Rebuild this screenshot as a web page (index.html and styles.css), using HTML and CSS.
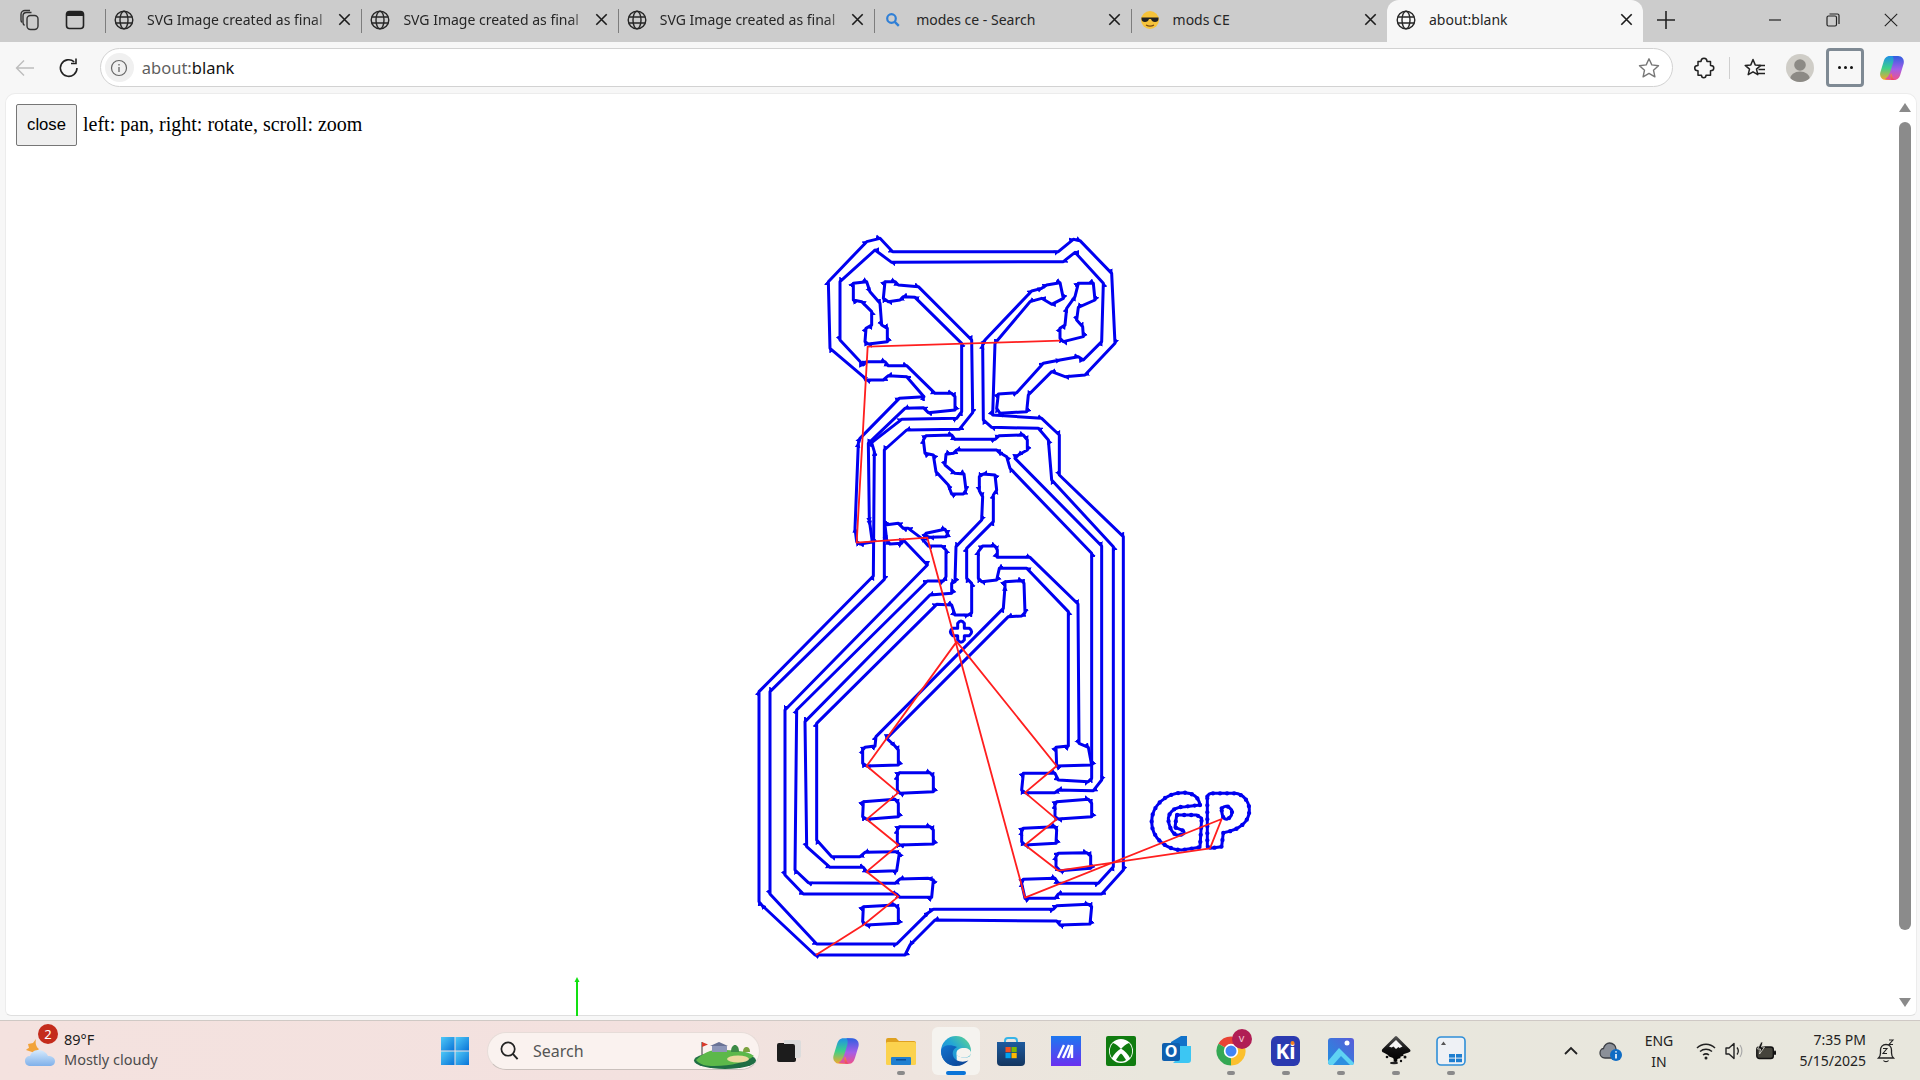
FILE: index.html
```html
<!DOCTYPE html>
<html lang="en">
<head>
<meta charset="utf-8">
<title>about:blank</title>
<link rel="stylesheet" href="styles.css">
</head>
<body>
<svg class="defs" width="0" height="0" aria-hidden="true">
  <defs>
    <symbol id="globe" viewBox="0 0 20 20"><g fill="none" stroke="#262626" stroke-width="1.4"><circle cx="10" cy="10" r="8.8"/><ellipse cx="10" cy="10" rx="4" ry="8.8"/><path d="M1.8 7h16.4M1.8 13h16.4"/></g></symbol>
    <symbol id="x" viewBox="0 0 12 12"><path d="M1.2 1.2l9.6 9.6M10.8 1.2l-9.6 9.6" fill="none" stroke="#1c1c1c" stroke-width="1.5"/></symbol>
    <linearGradient id="cpA" x1="0" y1="0" x2="0" y2="1"><stop offset="0" stop-color="#1f8fe8"/><stop offset=".5" stop-color="#3bd08a"/><stop offset="1" stop-color="#f7a82b"/></linearGradient>
    <linearGradient id="cpB" x1="0" y1="0" x2="0" y2="1"><stop offset="0" stop-color="#f0508a"/><stop offset=".45" stop-color="#a35ee8"/><stop offset="1" stop-color="#2f5fe0"/></linearGradient>
    <linearGradient id="cpC" x1="0" y1="0" x2="0" y2="1"><stop offset="0" stop-color="#f7a02b"/><stop offset="1" stop-color="#e8406a"/></linearGradient>
    <symbol id="copilot" viewBox="0 0 28 28">
      <path d="M12 2C8 2 6.500 4.500 5.500 8L2.300 18.500C1.300 22.500 4 26 8 26h5.500C12 24 12.300 21.500 13 19L15.500 11C16.500 7.500 18 4.500 21 3 19 2.300 16 2 12 2Z" fill="url(#cpA)"/>
      <path d="M12 2C8 2 6.500 4.500 5.500 8L2.300 18.500C1.300 22.500 4 26 8 26h5.500C12 24 12.300 21.500 13 19L15.500 11C16.500 7.500 18 4.500 21 3 19 2.300 16 2 12 2Z" fill="url(#cpB)" transform="rotate(180 14 14)"/>
      <path d="M13 19c-.7 2.500-1 5 .5 7H17c-1.500-.5-2.500-2-2.800-4z" fill="url(#cpC)"/>
    </symbol>
    <linearGradient id="edgeA" x1="0" y1="1" x2="1" y2="0"><stop offset="0" stop-color="#1b78d8"/><stop offset=".55" stop-color="#23a6d5"/><stop offset="1" stop-color="#63d98a"/></linearGradient>
    <linearGradient id="edgeB" x1="0" y1="0" x2="1" y2="1"><stop offset="0" stop-color="#1274d0"/><stop offset="1" stop-color="#0b3f8f"/></linearGradient>
    <linearGradient id="winA" x1="0" y1="0" x2="1" y2="1"><stop offset="0" stop-color="#4fc9f7"/><stop offset="1" stop-color="#0a74d8"/></linearGradient>
    <linearGradient id="maA" x1="0" y1="0" x2="0" y2="1"><stop offset="0" stop-color="#1d78f0"/><stop offset="1" stop-color="#6a30f0"/></linearGradient>
    <linearGradient id="phA" x1="0" y1="1" x2="1" y2="0"><stop offset="0" stop-color="#1f90e0"/><stop offset="1" stop-color="#5a5cd8"/></linearGradient>
    <linearGradient id="clA" x1="0" y1="0" x2="0" y2="1"><stop offset="0" stop-color="#d6eafc"/><stop offset="1" stop-color="#7fb0ea"/></linearGradient>
    <linearGradient id="stA" x1="0" y1="0" x2="0" y2="1"><stop offset="0" stop-color="#1d5a9e"/><stop offset="1" stop-color="#143660"/></linearGradient>
    <linearGradient id="inkA" x1="0" y1="0" x2="0" y2="1"><stop offset="0" stop-color="#555"/><stop offset=".5" stop-color="#111"/><stop offset="1" stop-color="#000"/></linearGradient>
    <marker id="arr" viewBox="0 0 10 10" refX="7" refY="5" markerWidth="2" markerHeight="2" orient="auto"><path d="M0 .5L10 5 0 9.500z" fill="#0000f0"/></marker>
  </defs>
</svg>

<div class="window">
  <header class="tabstrip">
    <button class="strip-btn first">
      <svg class="ic24" viewBox="0 0 24 24"><g fill="none" stroke="#333" stroke-width="1.400"><rect x="9" y="7.500" width="11" height="14" rx="3.500"/><path d="M6.500 17.500c-1-.8-1.500-2-1.500-3V8c0-2 1.500-3.500 3.500-3.500h5"/><path d="M3.800 14.500c-.5-.8-.8-1.700-.8-2.500V6.500C3 4 5 2.500 7 2.500h5"/></g></svg>
    </button>
    <button class="strip-btn second">
      <svg class="ic24" viewBox="0 0 24 24"><rect x="3.500" y="3.500" width="17" height="17" rx="3" fill="none" stroke="#222" stroke-width="1.600"/><path d="M3.500 6.500a3 3 0 0 1 3-3h11a3 3 0 0 1 3 3v1.500h-17z" fill="#222"/></svg>
    </button>
    <div class="tab">
      <svg class="tab-icon"><use href="#globe"/></svg>
      <span class="tab-title fade">SVG Image created as final</span>
      <svg class="tab-x"><use href="#x"/></svg>
    </div>
    <div class="tab">
      <svg class="tab-icon"><use href="#globe"/></svg>
      <span class="tab-title fade">SVG Image created as final</span>
      <svg class="tab-x"><use href="#x"/></svg>
    </div>
    <div class="tab">
      <svg class="tab-icon"><use href="#globe"/></svg>
      <span class="tab-title fade">SVG Image created as final</span>
      <svg class="tab-x"><use href="#x"/></svg>
    </div>
    <div class="tab">
      <svg class="tab-icon" viewBox="0 0 20 20"><circle cx="8.500" cy="8.500" r="4.300" fill="none" stroke="#2f7fd6" stroke-width="2.200"/><path d="M11.800 11.800l4 4" stroke="#2f7fd6" stroke-width="2.400"/></svg>
      <span class="tab-title">modes ce - Search</span>
      <svg class="tab-x"><use href="#x"/></svg>
    </div>
    <div class="tab">
      <svg class="tab-icon" viewBox="0 0 20 20"><circle cx="10" cy="10" r="9" fill="#f6c33b"/><path d="M1.500 7.500h17v1.500c0 2-1.500 3-3.500 3s-3.500-1-4-3h-2c-.5 2-2 3-4 3s-3.500-1-3.500-3z" fill="#222"/><path d="M6 15c2.500 1.500 5.500 1.500 8 0" fill="none" stroke="#7a4a10" stroke-width="1.200"/></svg>
      <span class="tab-title">mods CE</span>
      <svg class="tab-x"><use href="#x"/></svg>
    </div>
    <div class="tab active">
      <svg class="tab-icon"><use href="#globe"/></svg>
      <span class="tab-title">about:blank</span>
      <svg class="tab-x"><use href="#x"/></svg>
    </div>
    <button class="new-tab">
      <svg class="ic24" viewBox="0 0 24 24"><path d="M12 3v18M3 12h18" stroke="#222" stroke-width="1.600"/></svg>
    </button>
    <div class="win-controls">
      <button class="win-btn"><svg class="ic14" viewBox="0 0 14 14"><path d="M1 7h12" stroke="#222" stroke-width="1.200"/></svg></button>
      <button class="win-btn"><svg class="ic14" viewBox="0 0 14 14"><g fill="none" stroke="#222" stroke-width="1.200"><rect x="1" y="3" width="9.500" height="10" rx="1.500"/><path d="M3.500 1h8a1.500 1.500 0 0 1 1.500 1.500V11"/></g></svg></button>
      <button class="win-btn"><svg class="ic14" viewBox="0 0 14 14"><path d="M.8.800l12.400 12.400M13.200.800L.8 13.200" stroke="#222" stroke-width="1.100"/></svg></button>
    </div>
  </header>

  <nav class="toolbar">
    <button class="tool back"><svg class="ic24" viewBox="0 0 24 24"><path d="M21 12H3.500M11 4.500L3.500 12l7.500 7.500" fill="none" stroke="#bdbdbd" stroke-width="1.400"/></svg></button>
    <button class="tool reload"><svg class="ic24" viewBox="0 0 24 24"><path d="M20 12a8.300 8.300 0 1 1-2.800-6.200" fill="none" stroke="#222" stroke-width="1.600"/><path d="M19 2.500v5h-5" fill="none" stroke="#222" stroke-width="1.600"/></svg></button>
    <div class="address">
      <span class="site-info"><svg class="ic18" viewBox="0 0 18 18"><circle cx="9" cy="9" r="7.500" fill="none" stroke="#666" stroke-width="1.200"/><path d="M9 8v5M9 5v1.400" stroke="#666" stroke-width="1.300"/></svg></span>
      <span class="url"><span class="url-scheme">about:</span>blank</span>
      <svg class="star" viewBox="0 0 24 24"><path d="M12 2.800l2.800 6.100 6.700.8-5 4.500 1.400 6.600-5.900-3.400-5.900 3.400 1.400-6.600-5-4.500 6.700-.8z" fill="none" stroke="#777" stroke-width="1.400" stroke-linejoin="round"/></svg>
    </div>
    <button class="tool ext"><svg class="ic24" viewBox="0 0 24 24"><path d="M9 5.500c0-2 1-3.300 3-3.300s3 1.300 3 3.300h3.500v4c2 0 3.300 1 3.300 2.500s-1.300 2.800-3.300 2.800v4.500H14c0 1.700-1 2.500-2.300 2.500S9.500 21 9.500 19.300H6v-4.500c-2 0-3.300-1-3.300-2.800S4 9.500 6 9.500v-4z" fill="none" stroke="#222" stroke-width="1.500" stroke-linejoin="round"/></svg></button>
    <span class="tool-div"></span>
    <button class="tool fav"><svg class="ic24" viewBox="0 0 24 24"><path d="M10 3.500l2.200 5.400 5.600.5-4.300 3.700 1.300 5.600L10 15.800l-4.800 2.900 1.300-5.600L2.200 9.400l5.600-.5z" fill="none" stroke="#222" stroke-width="1.500" stroke-linejoin="round"/><path d="M16 9.500h6M15.500 13.500h6.500M14.500 17.500h7.500" stroke="#222" stroke-width="1.400"/></svg></button>
    <span class="profile"><svg class="ic28" viewBox="0 0 28 28"><defs><clipPath id="avatarClip"><circle cx="14" cy="14" r="14"/></clipPath></defs><circle cx="14" cy="14" r="14" fill="#cfcdc7"/><g clip-path="url(#avatarClip)" fill="#8c8a85"><circle cx="14" cy="11" r="5.800"/><ellipse cx="14" cy="25" rx="10" ry="7.500"/></g></svg></span>
    <button class="menu"><span class="menu-dot"></span><span class="menu-dot"></span><span class="menu-dot"></span></button>
    <svg class="copilot"><use href="#copilot"/></svg>
  </nav>

  <main class="viewport">
    <div class="page">
      <div class="controls">
        <button class="close-btn">close</button>
        <span class="hint">left: pan, right: rotate, scroll: zoom</span>
      </div>
    </div>
    <div class="scrollbar">
      <span class="sb-up"></span>
      <span class="sb-thumb"></span>
      <span class="sb-down"></span>
    </div>
  </main>

  <footer class="taskbar">
    <div class="weather">
      <span class="weather-icon">
        <svg class="ic32" viewBox="0 0 32 32"><path d="M11 4c-1 4 0 8 3 10l-4 4-9-3c1-1 2-2 3-2l-1-4 5-1z" fill="#f2a33a"/><path d="M6 31c-4 0-6-2-6-5s2-5 5-5c1-3 4-6 8-6 5 0 9 3 10 6 4 0 7 2 7 5s-2 5-6 5z" fill="url(#clA)"/></svg>
        <span class="weather-badge">2</span>
      </span>
      <span class="weather-text"><span class="temp">89°F</span><span class="cond">Mostly cloudy</span></span>
    </div>
    <svg class="win-logo" viewBox="0 0 28 28"><rect width="13.500" height="13.500" fill="url(#winA)"/><rect x="14.500" width="13.500" height="13.500" fill="url(#winA)"/><rect y="14.500" width="13.500" height="13.500" fill="url(#winA)"/><rect x="14.500" y="14.500" width="13.500" height="13.500" fill="url(#winA)"/></svg>
    <div class="search">
      <svg class="search-ic" viewBox="0 0 22 22"><circle cx="9.500" cy="9.500" r="7" fill="none" stroke="#222" stroke-width="1.800"/><path d="M14.500 14.500l5 5.500" stroke="#222" stroke-width="2"/></svg>
      <span class="search-label">Search</span>
      <svg class="golf" viewBox="0 0 64 28"><ellipse cx="32" cy="19.500" rx="31" ry="8.500" fill="#1f6e44"/><path d="M3 19c8-8 18-12 30-10 10 1 20 0 28 6-8 6-22 10-40 10-8 0-14-1-18-6z" fill="#5cb84a"/><ellipse cx="45" cy="18" rx="11" ry="3.500" fill="#ecd9a0"/><rect x="19" y="5" width="15" height="6" fill="#8d96b8"/><path d="M17 5l9-4 9 4z" fill="#6a7396"/><path d="M9 1v13" stroke="#555" stroke-width="1.200"/><path d="M9 1l6 2.500-6 2.500z" fill="#d93a2a"/><path d="M38 11c0-5 2-7 4-7s4 2 4 7z" fill="#3c8a46"/><path d="M50 11c0-4 2-5 3.500-5s3.500 1 3.500 5z" fill="#7ca23f"/></svg>
    </div>
    <svg class="taskview" viewBox="0 0 24 22"><rect y="3" width="19" height="19" rx="2" fill="#1c1c1c"/><path d="M7 0h15a2 2 0 0 1 2 2v14a2 2 0 0 1-2 2h-4V6a2 2 0 0 0-2-2H7z" fill="#dcdcdc"/></svg>
    <div class="apps">
      <span class="app"><svg class="ic30"><use href="#copilot"/></svg></span>
      <span class="app dot">
        <svg class="ic30" viewBox="0 0 30 30"><path d="M0 4a2 2 0 0 1 2-2h8l3 3h15a2 2 0 0 1 2 2v3H0z" fill="#dfa120"/><rect y="6" width="30" height="23" rx="1.500" fill="#fbd24e"/><rect x="5" y="21" width="20" height="8" rx="1" fill="#1f7fd0"/><rect x="10" y="23" width="10" height="1.500" fill="#0b4f96"/></svg>
      </span>
      <span class="app active">
        <svg class="ic30" viewBox="0 0 30 30"><circle cx="15" cy="15" r="15" fill="url(#edgeA)"/><path d="M30 17c0 2.500-3 4.500-7 4.500-5 0-7.500-2-7.500-4.500 0-3 3-5 7.500-5 4 0 7 2 7 5z" fill="#f5f3ef"/><path d="M16 30c5 0 9-2 12-6 2-2 2-3 2-5l-1 1c-1 1-3 1.500-6 1.500-4 0-7-1.500-7.500-4.500z" fill="#f5f3ef"/><path d="M0 15c0 9 7 15 15 15 5 0 9-2 12.500-5.500-6 2.500-14 1-15.500-5-1-4 1-7 4-8.500C9 8 1 9 0 15z" fill="url(#edgeB)"/></svg>
      </span>
      <span class="app">
        <svg class="ic30" viewBox="0 0 30 30"><path d="M9 9V5q0-3 3-3h6q3 0 3 3v4" fill="none" stroke="#36b4e8" stroke-width="2"/><path d="M1 6h28v20a4 4 0 0 1-4 4H5a4 4 0 0 1-4-4z" fill="url(#stA)"/><rect x="9.500" y="11" width="5.200" height="5.200" fill="#f25022"/><rect x="15.500" y="11" width="5.200" height="5.200" fill="#7fba00"/><rect x="9.500" y="17" width="5.200" height="5.200" fill="#00a4ef"/><rect x="15.500" y="17" width="5.200" height="5.200" fill="#ffb900"/></svg>
      </span>
      <span class="app">
        <svg class="ic30" viewBox="0 0 30 30"><rect width="30" height="30" fill="url(#maA)"/><path d="M7 22l6-13M12 22l6-13M21 9v13M17 22l4-13" stroke="#fff" stroke-width="2.400" fill="none"/></svg>
      </span>
      <span class="app">
        <svg class="ic30" viewBox="0 0 30 30"><rect width="30" height="30" rx="2" fill="#107c10"/><circle cx="15" cy="15" r="12" fill="#fff"/><path d="M7 7c3 1 6 3.500 8 6 2-2.500 5-5 8-6 4 4 4 11 1 15-2-4-5-7-9-9.500-4 2.500-7 5.500-9 9.500C3 18 3 11 7 7z" fill="#107c10"/><path d="M10 24c1.500-2.500 3-5 5-6.500 2 1.500 3.500 4 5 6.500-3 2-7 2-10 0z" fill="#107c10"/></svg>
      </span>
      <span class="app">
        <svg class="ic30" viewBox="0 0 30 30"><path d="M10 6l10-6h6v20H10z" fill="#1172c9"/><path d="M18 10h12v14a3 3 0 0 1-3 3H12l6-6z" fill="#3cc6f3"/><rect x="1" y="7" width="18" height="18" rx="2" fill="#0f5fae"/><text x="10" y="21" class="ol-text">O</text></svg>
      </span>
      <span class="app dot">
        <svg class="ic30" viewBox="0 0 30 30"><path d="M2.440 7.750A14.500 14.500 0 0 1 27.560 7.750L15 15Z" fill="#e94335"/><path d="M27.560 7.750A14.500 14.500 0 0 1 15 29.500L15 15Z" fill="#fbc02d"/><path d="M15 29.500A14.500 14.500 0 0 1 2.440 7.750L15 15Z" fill="#34a853"/><circle cx="15" cy="15" r="7.200" fill="#fff"/><circle cx="15" cy="15" r="5.500" fill="#4285f4"/></svg>
        <span class="chrome-badge">v</span>
      </span>
      <span class="app dot">
        <svg class="ic30" viewBox="0 0 30 30"><rect width="29" height="30" rx="6" fill="#2b3ab0"/><text x="14.500" y="23" class="ki-text">Ki</text><circle cx="21.500" cy="7" r="2" fill="#f58220"/></svg>
      </span>
      <span class="app dot">
        <svg class="ic30" viewBox="0 0 30 30"><rect x="2" y="2" width="26" height="27" rx="3" fill="url(#phA)"/><path d="M2 25l11-13 15 15a2 2 0 0 1-2 2H5a3 3 0 0 1-3-3z" fill="#5fd3f3"/><path d="M7 29l8-9 9 9z" fill="#2d8fe0"/><circle cx="21" cy="7" r="2.500" fill="#fff"/></svg>
      </span>
      <span class="app dot">
        <svg class="ic30" viewBox="0 0 30 30"><path d="M14 .5a1.500 1.500 0 0 1 2 0L29 13.500c1 1.500.5 2.500-1.500 3L23 18c-1 .3-1 1 0 1.500l-3 1c-1 .3-1 1 0 1.500l-3 .8c-1 .4-1 1.500-.5 2.500-1 1-3 1-4 0 .5-2 0-3-1-3.500L8 20.500c-1-.5-.5-1.500-1-1.500l-4.500-2.500C.5 15.500.5 14.500 1.500 13z" fill="url(#inkA)"/><path d="M15 4l6.500 6.500-3 1.500-1-1-2.500 2-2.500-2.500-2 1-2.500-1z" fill="#f5f5f5"/><circle cx="6" cy="21" r="1.300" fill="#111"/><circle cx="24" cy="21" r="1.500" fill="#111"/><circle cx="20" cy="25" r="1.200" fill="#111"/><ellipse cx="13" cy="27" rx="4" ry="1.200" fill="#222"/></svg>
      </span>
      <span class="app dot">
        <svg class="ic30" viewBox="0 0 30 30"><rect x="1" y="1" width="28" height="28" rx="4" fill="#eef1f5" stroke="#2f8fd8" stroke-width="1.600"/><path d="M5 9l2.500-3.500L10 9z" fill="#555"/><rect x="13" y="18" width="6" height="3.600" fill="#1f7fd0"/><rect x="20" y="18" width="6" height="3.600" fill="#1f7fd0"/><rect x="13" y="22.600" width="6" height="3.600" fill="#1f7fd0"/><rect x="20" y="22.600" width="6" height="3.600" fill="#1f7fd0"/></svg>
      </span>
    </div>
    <div class="tray">
      <svg class="tray-chev" viewBox="0 0 16 16"><path d="M2 11l6-6 6 6" fill="none" stroke="#222" stroke-width="1.800"/></svg>
      <span class="tray-cloud">
        <svg class="ic24" viewBox="0 0 24 24"><path d="M6 19c-3 0-5-2-5-5s2-4.500 3.500-4.500C5 6 8 4 10.500 4c3.500 0 6.500 2.500 6.500 6v9z" fill="#8b9098" stroke="#3c3f44" stroke-width="1.300"/><circle cx="17" cy="16" r="6" fill="#0f6cc4"/><path d="M17 15v4.500M17 12.300v1.300" stroke="#fff" stroke-width="1.600"/></svg>
      </span>
      <span class="lang"><span>ENG</span><span>IN</span></span>
      <svg class="tray-wifi" viewBox="0 0 20 20"><g fill="none" stroke="#222" stroke-width="1.500"><path d="M1 7c5-5 13-5 18 0"/><path d="M4 10.500c3.500-3 8.500-3 12 0"/><path d="M7 14c2-1.500 4-1.500 6 0"/></g><circle cx="10" cy="17" r="1.500" fill="#222"/></svg>
      <svg class="tray-vol" viewBox="0 0 18 20"><path d="M1 7h3l5-4.500v15L4 13H1z" fill="none" stroke="#222" stroke-width="1.400" stroke-linejoin="round"/><path d="M12 6.500c1.500 2 1.500 5 0 7" fill="none" stroke="#222" stroke-width="1.300"/><path d="M15 4c2.500 3.500 2.500 8.500 0 12" fill="none" stroke="#aaa" stroke-width="1.200"/></svg>
      <svg class="tray-bat" viewBox="0 0 20 18"><rect x=".8" y="5" width="16.500" height="11.500" rx="2.500" fill="#45443c" stroke="#111" stroke-width="1.400"/><rect x="18" y="8.500" width="2" height="4.500" rx="1" fill="#111"/><path d="M5 0L1.500 7h3l-1 5 5-7h-3l1.500-5z" fill="#111" stroke="#e8e7dd" stroke-width=".8"/></svg>
      <span class="clock"><span>7:35 PM</span><span>5/15/2025</span></span>
      <svg class="tray-bell" viewBox="0 0 20 26"><path d="M2.500 20c1.500-1.500 2-3 2-5v-3c0-3 2-5.500 5.500-5.500s5.500 2.500 5.500 5.500v3c0 2 .5 3.500 2 5z" fill="none" stroke="#222" stroke-width="1.300"/><path d="M7.500 22.500c1 1.500 4 1.500 5 0" fill="none" stroke="#222" stroke-width="1.300"/><path d="M7 10.500h4l-4 5h4M13 2h4l-4 4.500h4" fill="none" stroke="#222" stroke-width="1.100"/></svg>
    </div>
  </footer>

  <svg class="toolpath" viewBox="0 0 1920 1080" aria-hidden="true">
    <path class="axis" d="M577 1016V981"/>
    <path class="axis-head" d="M577 977l2.500 5h-5z"/>
    <g transform="translate(800 220) scale(.33333)">
      <g class="cut">
        <path d="M85 185L200 65 240 55 278 95 775 95 820 58 840 62 935 160 945 370 855 465 795 470 755 455 685 525 680 575 600 580 590 565 595 522 650 518 730 430 780 420 835 410 850 420 905 365 910 190 825 97 790 125 275 127 225 90 120 185 120 360 190 435 200 425 255 425 265 437 320 437 405 520 455 520 465 530 465 570 385 578 370 563 315 565 205 670 208 905 210 915 217 966 180 972 170 965 165 925 175 670 180 655 298 535 372 530 320 470 265 467 250 480 200 480 190 470 90 385Z"/>
        <path d="M160 190L200 185 210 215 240 250 245 315 262 325 262 365 205 372 195 365 198 325 215 315 215 275 185 245 160 240Z"/>
        <path d="M835 190L880 190 885 240 835 262 830 300 848 320 850 350 790 365 780 355 780 325 795 315 800 265 825 230Z"/>
        <path d="M223 695L215 668 305 598 470 595 485 575 485 370 345 232 310 230 300 240 265 245 250 235 255 185 285 185 295 195 355 200 515 360 518 578 478 628 320 630 253 690 253 1078 -90 1415 -90 2022 50 2172 290 2172 385 2078 400 2068 760 2068 770 2057 865 2053 875 2060 870 2112 780 2115 770 2103 405 2100 330 2175 315 2205 45 2205 -115 2055 -123 2045 -123 1415 220 1068Z"/>
        <path d="M-45 1470L-45 1965 10 2022 290 2022 300 2032 395 2032 400 1980 385 1975 300 1977 285 1990 25 1988 -15 1950 -10 1470 382 1083 430 1083 438 1070 438 990 425 978 385 978 365 955 325 925 310 925 295 910 255 915 260 960 270 972 305 970 310 960 382 1035Z"/>
        <path d="M378 940L435 928 443 942 438 950 390 952 378 948Z"/>
        <path d="M15 1505L20 1880 90 1942 190 1942 200 1955 290 1952 298 1900 285 1895 195 1897 180 1910 95 1910 50 1860 50 1510 410 1153 455 1155 465 1185 505 1185 515 1178 515 1090 500 1075 500 985 580 905 580 825 590 810 585 765 550 762 538 770 538 812 548 830 545 900 468 980 465 1085 455 1090 455 1120 390 1125Z"/>
        <path d="M535 995L548 978 585 978 592 990 592 1012 690 1012 834 1152 837 1570 865 1582 875 1635 770 1638 768 1582 805 1578 805 1175 680 1045 598 1045 590 1080 545 1085 535 1075Z"/>
        <path d="M875 1000L630 745 620 710 595 695 590 690 470 690 460 700 438 703 435 735 465 760 492 762 498 810 490 822 455 822 445 795 408 755 400 705 375 700 370 660 378 647 455 645 465 658 585 658 598 647 670 645 682 660 682 690 655 705 645 715 905 978 905 1680 880 1712 775 1710 765 1718 675 1718 665 1710 670 1660 765 1660 775 1680 865 1685 875 1675Z"/>
        <path d="M940 980L755 780 745 660 715 625 575 622 550 600 548 375 555 360 695 213 725 205 740 195 780 188 790 235 755 253 725 235 690 245 585 370 578 585 725 595 778 645 778 765 970 950 970 1950 905 2022 775 2022 765 2035 675 2035 665 1990 670 1978 765 1975 775 1990 895 1990 940 1940Z"/>
        <path d="M615 1085L665 1082 672 1090 675 1178 665 1188 625 1190 260 1555 285 1578 295 1590 295 1635 200 1638 188 1630 188 1590 195 1582 225 1578 228 1550 610 1165 615 1100Z"/>
        <path d="M298 1658L390 1658 400 1670 400 1715 300 1720 292 1710 292 1668Z"/>
        <path d="M190 1745L285 1738 295 1750 295 1790 200 1798 188 1790Z"/>
        <path d="M298 1820L390 1820 400 1830 400 1872 300 1875 292 1870 292 1830Z"/>
        <path d="M190 2060L285 2055 295 2065 295 2110 200 2115 188 2105Z"/>
        <path d="M770 1745L865 1738 875 1750 875 1790 775 1797 765 1790 765 1755Z"/>
        <path d="M670 1825L765 1820 770 1830 768 1870 675 1875 665 1865 665 1835Z"/>
        <path d="M775 1900L860 1898 872 1908 872 1945 780 1952 768 1940 768 1910Z"/>
      </g>
      <g class="smooth">
        <path d="M473 1210Q483 1196 493 1210L493 1225 508 1225Q522 1235 508 1247L493 1247 493 1260Q483 1274 473 1260L473 1247 458 1247Q444 1235 458 1225L473 1225Z"/>
        <path id="gpG" d="M1200 1755C1195 1725 1170 1718 1150 1718 1095 1718 1055 1760 1055 1805 1055 1855 1100 1890 1145 1890L1200 1882 1205 1795 1190 1785 1130 1785 1125 1822 1150 1832Q1160 1845 1130 1845C1115 1840 1105 1815 1105 1795 1108 1775 1125 1760 1155 1760Z"/>
        <path id="gpP" d="M1222 1730Q1225 1720 1240 1720L1305 1720C1330 1722 1348 1745 1348 1770 1348 1805 1320 1830 1270 1838L1265 1880 1230 1885 1222 1880Z"/>
        <path id="gpI" d="M1265 1765Q1280 1750 1295 1770 1300 1790 1280 1798 1265 1798 1265 1765Z"/>
      </g>
      <g class="beads">
        <use href="#gpG"/>
        <use href="#gpP"/>
        <use href="#gpI"/>
      </g>
      <g class="travel">
        <path d="M780 362L203 380 170 968 382 953 675 2033 1265 1797 1230 1885 775 1952 675 1875 770 1798 675 1718 770 1638 470 1265 200 1638 295 1718 200 1798 295 1875 200 1955 295 2030 190 2115 48 2205"/>
      </g>
    </g>
  </svg>
</div>
</body>
</html>
```

FILE: styles.css
```css
* { box-sizing: border-box; }
html, body { margin: 0; padding: 0; width: 1920px; height: 1080px; overflow: hidden; }
body { font-family: "Noto Sans", "Open Sans", sans-serif; color: #222; background: #f7f7f7; }
button { border: 0; background: none; padding: 0; margin: 0; font: inherit; color: inherit; display: flex; align-items: center; justify-content: center; }
svg { display: block; flex: none; }
.defs { position: absolute; }
.ic14 { width: 14px; height: 14px; }
.ic18 { width: 18px; height: 18px; }
.ic24 { width: 24px; height: 24px; }
.ic28 { width: 28px; height: 28px; }
.ic30 { width: 30px; height: 30px; }
.ic32 { width: 32px; height: 32px; }

.window { position: relative; width: 1920px; height: 1080px; display: flex; flex-direction: column; overflow: hidden; background: #f7f7f7; }

/* tab strip */
.tabstrip { height: 42px; flex: none; display: flex; align-items: stretch; background: #cccccc; padding-left: 17px; }
.strip-btn { width: 24px; }
.strip-btn.first { padding-bottom: 2px; margin-left: 1px; margin-right: -1px; }
.strip-btn.second { margin-left: 22px; margin-right: 18px; padding-bottom: 2px; }
.tab { position: relative; width: 256.4px; flex: none; display: flex; align-items: center; padding: 0 10px 3px 9px; gap: 13px; font-size: 14px; }
.tab::before { content: ""; position: absolute; left: 0; top: 9px; height: 24px; width: 1px; background: #7d7d7d; }
.tab.active { background: #f7f7f7; border-radius: 12px 12px 0 0; }
.tab.active::before { display: none; }
.tab-icon { width: 20px; height: 20px; }
.tab-title { flex: 1; min-width: 0; white-space: nowrap; color: #262626; }
.tab-title.fade { -webkit-mask-image: linear-gradient(90deg, #000 93%, rgba(0,0,0,.45) 100%); mask-image: linear-gradient(90deg, #000 93%, rgba(0,0,0,.45) 100%); }
.tab-x { width: 13px; height: 13px; }
.new-tab { width: 24px; margin-left: 11px; padding-bottom: 2px; }
.win-controls { margin-left: auto; display: flex; }
.win-btn { width: 58px; padding-bottom: 2px; }

/* toolbar */
.toolbar { height: 51px; flex: none; display: flex; align-items: center; padding: 0 0 0 13px; background: #f7f7f7; }
.tool { width: 24px; height: 24px; }
.reload { margin-left: 20.3px; }
.address { margin-left: 18.5px; width: 1573.5px; height: 39px; background: #fff; border: 1.5px solid #d2d2d2; border-radius: 20px; display: flex; align-items: center; padding: 0 11.5px 0 4px; }
.site-info { width: 29px; height: 29px; border-radius: 50%; background: #f0f0f0; display: flex; align-items: center; justify-content: center; }
.url { margin-left: 8px; font-size: 16.5px; color: #111; flex: 1; }
.url-scheme { color: #5f5f5f; }
.star { width: 24px; height: 24px; }
.ext { margin-left: 19px; }
.tool-div { width: 1px; height: 22px; background: #cfcfcf; margin-left: 13px; }
.fav { margin-left: 13px; }
.profile { margin-left: 19px; width: 28px; height: 28px; }
.menu { margin-left: 12px; width: 38px; height: 39px; border: 3px solid #7f8a94; border-radius: 4px; gap: 3px; }
.menu-dot { width: 3px; height: 3px; border-radius: 50%; background: #111; }
.copilot { width: 28px; height: 28px; margin-left: 14px; }

/* page viewport */
.viewport { height: 923px; flex: none; margin: 0 3px 4px 5px; background: #fff; border: 1px solid #ececec; border-bottom-color: #dfdfdf; border-radius: 10px 10px 6px 6px; display: flex; }
.page { flex: 1; padding: 10px 0 0 10px; }
.controls { display: flex; align-items: center; gap: 6px; }
.close-btn { width: 61px; height: 42px; background: #efefef; border: 1px solid #767676; border-radius: 2px; font-family: "Liberation Sans", Arial, sans-serif; font-size: 16.67px; color: #000; }
.hint { font-family: "Liberation Serif", "Times New Roman", serif; font-size: 20px; color: #000; margin-top: -2px; }
.scrollbar { width: 22px; flex: none; display: flex; flex-direction: column; align-items: center; padding-top: 9px; }
.sb-up { width: 0; height: 0; border-left: 6px solid transparent; border-right: 6px solid transparent; border-bottom: 9px solid #8a8a8a; }
.sb-thumb { width: 12px; height: 808px; margin-top: 10px; border-radius: 6px; background: #8b8b8b; }
.sb-down { width: 0; height: 0; border-left: 6px solid transparent; border-right: 6px solid transparent; border-top: 9px solid #8a8a8a; margin-top: 68px; }

/* taskbar */
.taskbar { height: 60px; flex: none; display: flex; align-items: center; background: linear-gradient(90deg, #f4e2df 0%, #f3e1df 35%, #e9e7dd 60%, #e8e7dd 100%); border-top: 1px solid #cfc9c5; }
.weather { width: 441px; flex: none; display: flex; align-items: center; padding-left: 25px; gap: 7px; }
.weather-icon { position: relative; width: 32px; height: 32px; }
.weather-badge { position: absolute; left: 13px; top: -11px; width: 20px; height: 20px; border-radius: 50%; background: #c42b1c; color: #fff; font-size: 13px; line-height: 20px; text-align: center; }
.weather-text { display: flex; flex-direction: column; font-size: 14.5px; line-height: 20px; margin-top: -3px; }
.temp { color: #1c1c1c; }
.cond { color: #4c4c4c; }
.win-logo { width: 28px; height: 28px; }
.search { margin-left: 18px; width: 273px; height: 38px; border-radius: 19px; background: #faf2ef; border: 1px solid #e6dcd8; border-bottom-color: #c9c0bc; display: flex; align-items: center; padding: 0 2px 0 11px; }
.search-ic { width: 21px; height: 21px; }
.search-label { margin-left: 13px; font-size: 16px; color: #555; flex: 1; }
.golf { width: 64px; height: 28px; margin-top: 8px; }
.taskview { width: 24px; height: 22px; margin-left: 17px; }
.apps { margin-left: 17.5px; display: flex; align-items: center; }
.app { position: relative; width: 55px; height: 48px; flex: none; display: flex; align-items: center; justify-content: center; }
.app.dot::after { content: ""; position: absolute; left: 50%; bottom: 0; width: 8px; height: 4px; margin-left: -4px; border-radius: 2px; background: #8a8a8a; }
.app.active { background: #f5f3ef; border-radius: 6px; width: 48px; margin: 0 3.5px; }
.app.active::after { content: ""; position: absolute; left: 50%; bottom: 0; width: 20px; height: 4px; margin-left: -10px; border-radius: 2px; background: #0a74d8; }
.chrome-badge { position: absolute; left: 28px; top: 2px; width: 20px; height: 20px; border-radius: 50%; background: #b01e55; color: #f2c4d4; font-size: 11px; line-height: 18px; text-align: center; }
.ol-text { font-family: "Noto Sans", sans-serif; font-size: 16px; font-weight: 700; fill: #fff; text-anchor: middle; }
.ki-text { font-family: "Noto Sans", sans-serif; font-size: 21px; font-weight: 700; fill: #fff; text-anchor: middle; }
.tray { margin-left: 83.5px; display: flex; align-items: center; }
.tray-chev { width: 16px; height: 16px; margin-left: 1px; margin-right: -1px; }
.tray-cloud { margin-left: 21px; width: 24px; height: 24px; }
.lang { margin-left: 16px; width: 40px; display: flex; flex-direction: column; align-items: center; font-size: 14px; line-height: 21px; color: #222; }
.tray-wifi { width: 20px; height: 20px; margin-left: 17px; }
.tray-vol { width: 18px; height: 20px; margin-left: 9px; }
.tray-bat { width: 20px; height: 18px; margin-left: 13px; }
.clock { margin-left: 20px; width: 70px; display: flex; flex-direction: column; align-items: flex-end; font-size: 14px; line-height: 21px; white-space: nowrap; color: #222; margin-top: -2px; }
.tray-bell { width: 20px; height: 26px; margin-left: 10px; }

/* CNC toolpath drawing on the free canvas */
.toolpath { position: absolute; left: 0; top: 0; width: 1920px; height: 1080px; pointer-events: none; filter: blur(.4px); }
.cut path { fill: none; stroke: #0000f0; stroke-width: 9; stroke-linejoin: round; marker-start: url(#arr); marker-mid: url(#arr); marker-end: url(#arr); }
.smooth { fill: none; stroke: #0000f0; stroke-width: 9; stroke-linejoin: round; }
.beads { fill: none; stroke: #0000f0; stroke-width: 13; stroke-linecap: round; stroke-dasharray: 0 21; }
.travel path { fill: none; stroke: #ff1f1f; stroke-width: 5.5; stroke-linejoin: round; }
.axis { stroke: #12e012; stroke-width: 2; fill: none; }
.axis-head { fill: #12e012; }
```
